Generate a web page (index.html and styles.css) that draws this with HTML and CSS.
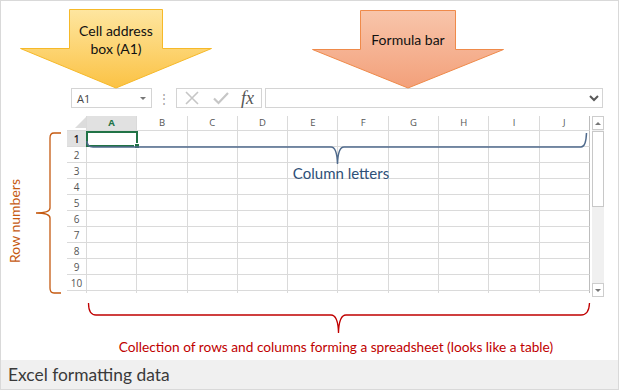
FILE: index.html
```html
<!DOCTYPE html>
<html lang="en">
<head>
    <meta charset="UTF-8">
    <title>Excel formatting data</title>
    <link rel="stylesheet" href="styles.css">
</head>
<body>

    <div class="frame">
        <div class="stage">
            <div class="formula-row">
                <div class="namebox"><span>A1</span><span class="caret"></span></div>
                <div class="grip">&#8942;</div>
                <div class="fxbox">
                    <svg class="icon" width="14" height="14" viewBox="0 0 14 14"><path d="M1 1 L13 13 M13 1 L1 13" stroke="#c6c6c6" stroke-width="1.6" fill="none"/></svg>
                    <svg class="icon" width="16" height="14" viewBox="0 0 16 14"><path d="M1 7.5 L5.5 12 L15 2" stroke="#c6c6c6" stroke-width="2.2" fill="none"/></svg>
                    <span class="fx">fx</span>
                </div>
                <div class="formula">
                    <svg width="10" height="8" viewBox="0 0 10 8"><path d="M1 2 L5 6 L9 2" stroke="#595959" stroke-width="2" fill="none"/></svg>
                </div>
            </div>

            <div class="sheet">
                <div class="grid">
                    <div class="corner"><span></span></div><div class="hd sel">A</div><div class="hd">B</div><div class="hd">C</div><div class="hd">D</div><div class="hd">E</div><div class="hd">F</div><div class="hd">G</div><div class="hd">H</div><div class="hd">I</div><div class="hd">J</div>
                    <div class="rn sel">1</div><div class="c active"></div><div class="c"></div><div class="c"></div><div class="c"></div><div class="c"></div><div class="c"></div><div class="c"></div><div class="c"></div><div class="c"></div><div class="c"></div>
                    <div class="rn">2</div><div class="c"></div><div class="c"></div><div class="c"></div><div class="c"></div><div class="c"></div><div class="c"></div><div class="c"></div><div class="c"></div><div class="c"></div><div class="c"></div>
                    <div class="rn">3</div><div class="c"></div><div class="c"></div><div class="c"></div><div class="c"></div><div class="c"></div><div class="c"></div><div class="c"></div><div class="c"></div><div class="c"></div><div class="c"></div>
                    <div class="rn">4</div><div class="c"></div><div class="c"></div><div class="c"></div><div class="c"></div><div class="c"></div><div class="c"></div><div class="c"></div><div class="c"></div><div class="c"></div><div class="c"></div>
                    <div class="rn">5</div><div class="c"></div><div class="c"></div><div class="c"></div><div class="c"></div><div class="c"></div><div class="c"></div><div class="c"></div><div class="c"></div><div class="c"></div><div class="c"></div>
                    <div class="rn">6</div><div class="c"></div><div class="c"></div><div class="c"></div><div class="c"></div><div class="c"></div><div class="c"></div><div class="c"></div><div class="c"></div><div class="c"></div><div class="c"></div>
                    <div class="rn">7</div><div class="c"></div><div class="c"></div><div class="c"></div><div class="c"></div><div class="c"></div><div class="c"></div><div class="c"></div><div class="c"></div><div class="c"></div><div class="c"></div>
                    <div class="rn">8</div><div class="c"></div><div class="c"></div><div class="c"></div><div class="c"></div><div class="c"></div><div class="c"></div><div class="c"></div><div class="c"></div><div class="c"></div><div class="c"></div>
                    <div class="rn">9</div><div class="c"></div><div class="c"></div><div class="c"></div><div class="c"></div><div class="c"></div><div class="c"></div><div class="c"></div><div class="c"></div><div class="c"></div><div class="c"></div>
                    <div class="rn">10</div><div class="c"></div><div class="c"></div><div class="c"></div><div class="c"></div><div class="c"></div><div class="c"></div><div class="c"></div><div class="c"></div><div class="c"></div><div class="c"></div>
                    <div class="rn"></div><div class="c"></div><div class="c"></div><div class="c"></div><div class="c"></div><div class="c"></div><div class="c"></div><div class="c"></div><div class="c"></div><div class="c"></div><div class="c"></div>
                </div>
                <div class="vscroll">
                    <div class="sbtn"><span class="up"></span></div>
                    <div class="thumb"></div>
                    <div class="track"></div>
                    <div class="sbtn"><span class="down"></span></div>
                </div>
            </div>
        </div>

        <div class="caption">Excel formatting data</div>

        <!-- annotations drawn over the sheet -->
        <svg class="notes" width="619" height="390" viewBox="0 0 619 390">
            <defs>
                <linearGradient id="yellow" x1="0" y1="0" x2="0" y2="1">
                    <stop offset="0" stop-color="#fee6a0"/>
                    <stop offset="1" stop-color="#fbc244"/>
                </linearGradient>
                <linearGradient id="orange" x1="0" y1="0" x2="0" y2="1">
                    <stop offset="0" stop-color="#f8c5ab"/>
                    <stop offset="1" stop-color="#f3a07a"/>
                </linearGradient>
            </defs>
            <polygon points="69.5,9.5 162.5,9.5 162.5,48.5 211.5,48.5 116,88 20.5,48.5 69.5,48.5" fill="url(#yellow)" stroke="#f6b929"/>
            <polygon points="360.5,10.5 455.5,10.5 455.5,49.5 503.5,49.5 408,88 312.5,49.5 360.5,49.5" fill="url(#orange)" stroke="#ef8a4a"/>
            <path d="M87 141 Q87 147 93 147 L331 147 Q337 147 337.5 164 Q338 147 344 147 L581 147 Q586 147 586.5 133" stroke="#4f6a8c" stroke-width="1.5" fill="none"/>
            <path d="M61 133 L54 133 Q50 133 50 138 L50 208 Q50 213 36 213 Q50 213 50 218 L50 288 Q50 293 54 293 L61 293" stroke="#c55a11" stroke-width="1.3" fill="none"/>
            <path d="M88.5 303 Q88.5 315 96 315 L331 315 Q338 315 338.5 333 Q339 315 346 315 L581 315 Q589 315 589.5 303" stroke="#c00000" stroke-width="1.3" fill="none"/>
        </svg>
        <div class="note note-name">Cell address<br>box (A1)</div>
        <div class="note note-formula">Formula bar</div>
        <div class="note note-cols">Column letters</div>
        <div class="note note-rows">Row numbers</div>
        <div class="note note-table">Collection of rows and columns forming a spreadsheet (looks like a table)</div>
    </div>

</body>
</html>
```

FILE: styles.css
```css
body {
    margin: 0;
    background: #fff;
}
.frame {
    position: relative;
    width: 619px;
    height: 390px;
    box-sizing: border-box;
    border: 1px solid #d9d9d9;
    display: flex;
    flex-direction: column;
    font-family: "Open Sans", sans-serif;
    overflow: hidden;
}
.stage {
    flex: 1;
    padding-top: 87px;
}

/* formula bar row */
.formula-row {
    display: flex;
    align-items: center;
    height: 20px;
    margin-left: 70px;
}
.namebox {
    width: 81px;
    height: 20px;
    box-sizing: border-box;
    border: 1px solid #d4d4d4;
    display: flex;
    align-items: center;
    justify-content: space-between;
    padding: 0 5px 0 5px;
    font-size: 11px;
    color: #444;
}
.caret {
    width: 0;
    height: 0;
    border-left: 3px solid transparent;
    border-right: 3px solid transparent;
    border-top: 3px solid #777;
}
.grip {
    width: 24px;
    text-align: center;
    font-size: 12px;
    color: #a0a0a0;
}
.fxbox {
    width: 86px;
    height: 20px;
    box-sizing: border-box;
    border: 1px solid #d4d4d4;
    display: flex;
    align-items: center;
    padding-left: 8px;
    gap: 13px;
}
.fxbox .icon:nth-child(2) {
    margin-left: 1px;
}
.fx {
    font-family: "Liberation Serif", serif;
    font-style: italic;
    font-size: 18px;
    line-height: 18px;
    color: #555;
    margin-left: -1px;
}
.formula {
    margin-left: 3px;
    width: 338px;
    height: 20px;
    box-sizing: border-box;
    border: 1px solid #d4d4d4;
    display: flex;
    align-items: center;
    justify-content: flex-end;
    padding-right: 3px;
}

/* grid */
.sheet {
    display: flex;
    margin: 8px 0 0 66px;
}
.grid {
    width: 523px;
    height: 177px;
    overflow: hidden;
    display: grid;
    grid-template-columns: 20px repeat(10, 1fr);
    grid-template-rows: 15px repeat(11, 16px);
}
.grid > div {
    box-sizing: border-box;
    border-right: 1px solid #dadada;
    border-bottom: 1px solid #dadada;
}
.grid > div:nth-child(11n) {
    border-right-color: #bdbdbd;
}
.hd {
    font-size: 9.5px;
    color: #555;
    text-align: center;
    line-height: 14px;
    border-bottom-color: #cfcfcf;
}
.rn {
    font-size: 10px;
    color: #555;
    text-align: center;
    line-height: 16px;
}
.hd.sel {
    background: #e1e1e1;
    color: #217346;
    font-weight: 700;
}
.rn.sel {
    background: #e1e1e1;
    color: #222;
    font-weight: 600;
}
.corner {
    position: relative;
}
.corner span {
    position: absolute;
    right: 0;
    bottom: 2px;
    width: 0;
    height: 0;
    border-left: 11px solid transparent;
    border-bottom: 11px solid #dcdcdc;
}
.c.active {
    position: relative;
}
.c.active::before {
    content: "";
    position: absolute;
    left: -1px;
    top: 0;
    right: -2px;
    bottom: -1px;
    border: 2px solid #217346;
}
.c.active::after {
    content: "";
    position: absolute;
    right: -4px;
    bottom: -3px;
    width: 4px;
    height: 4px;
    background: #217346;
    border: 1px solid #fff;
}

/* scrollbar */
.vscroll {
    margin-left: 2px;
    width: 12px;
    height: 181px;
    display: flex;
    flex-direction: column;
    background: #f0f0f0;
}
.sbtn {
    height: 14px;
    box-sizing: border-box;
    border: 1px solid #cdcdcd;
    background: #fff;
    display: flex;
    align-items: center;
    justify-content: center;
}
.up, .down {
    width: 0;
    height: 0;
    border-left: 3px solid transparent;
    border-right: 3px solid transparent;
}
.up {
    border-bottom: 3px solid #777;
}
.down {
    border-top: 3px solid #777;
}
.thumb {
    height: 76px;
    margin-top: 1px;
    box-sizing: border-box;
    border: 1px solid #c8c8c8;
    background: #fff;
}
.track {
    flex: 1;
}

/* caption */
.caption {
    height: 29px;
    background: #f0f0f0;
    font-family: Lato, sans-serif;
    font-size: 17.4px;
    color: #3a3a3a;
    line-height: 29px;
    padding-left: 7px;
}

/* annotations */
.notes {
    position: absolute;
    left: -1px;
    top: -1px;
}
.note {
    position: absolute;
    font-family: Lato, sans-serif;
    text-align: center;
    line-height: 18px;
    white-space: nowrap;
}
.note-name {
    left: 68px;
    top: 21px;
    width: 94px;
    font-size: 14px;
    color: #111;
}
.note-formula {
    left: 359px;
    top: 30px;
    width: 96px;
    font-size: 14px;
    color: #111;
}
.note-cols {
    left: 280px;
    top: 163px;
    width: 120px;
    font-size: 15px;
    color: #2e5078;
}
.note-rows {
    left: -36px;
    top: 211px;
    width: 100px;
    font-size: 14px;
    color: #c55a11;
    transform: rotate(-90deg);
}
.note-table {
    left: 85px;
    top: 337px;
    width: 500px;
    font-size: 13.7px;
    color: #c00000;
}
```
